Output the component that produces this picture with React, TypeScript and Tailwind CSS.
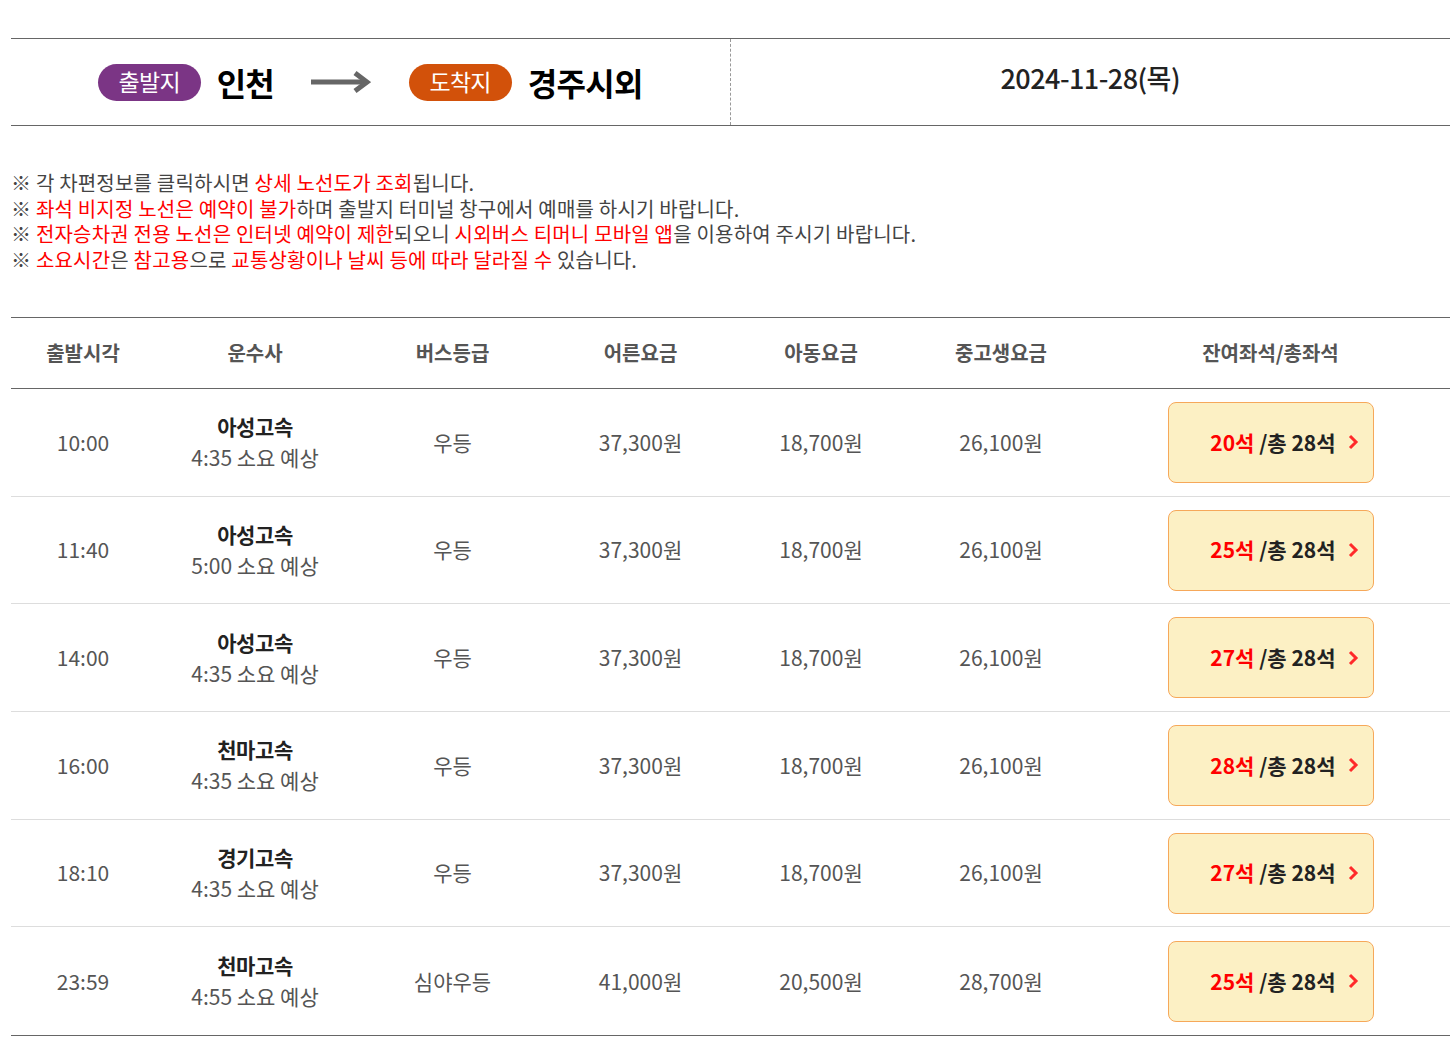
import React from "react";

type Bus = {
  time: string;
  company: string;
  duration: string;
  grade: string;
  adult: string;
  child: string;
  student: string;
  left: number;
  total: number;
};

const buses: Bus[] = [
  { time: "10:00", company: "아성고속", duration: "4:35", grade: "우등", adult: "37,300원", child: "18,700원", student: "26,100원", left: 20, total: 28 },
  { time: "11:40", company: "아성고속", duration: "5:00", grade: "우등", adult: "37,300원", child: "18,700원", student: "26,100원", left: 25, total: 28 },
  { time: "14:00", company: "아성고속", duration: "4:35", grade: "우등", adult: "37,300원", child: "18,700원", student: "26,100원", left: 27, total: 28 },
  { time: "16:00", company: "천마고속", duration: "4:35", grade: "우등", adult: "37,300원", child: "18,700원", student: "26,100원", left: 28, total: 28 },
  { time: "18:10", company: "경기고속", duration: "4:35", grade: "우등", adult: "37,300원", child: "18,700원", student: "26,100원", left: 27, total: 28 },
  { time: "23:59", company: "천마고속", duration: "4:55", grade: "심야우등", adult: "41,000원", child: "20,500원", student: "28,700원", left: 25, total: 28 },
];

const cols = "grid grid-cols-[144px_200px_195px_181px_180px_180px_1fr] items-center";

function Arrow() {
  return (
    <svg width="60" height="22" viewBox="0 0 60 22" fill="none">
      <path d="M0 11H54" stroke="#666" strokeWidth="5" />
      <path d="M44 2L56 11L44 20" stroke="#666" strokeWidth="5" strokeLinejoin="miter" />
    </svg>
  );
}

function Chevron() {
  return (
    <svg width="11" height="18" viewBox="0 0 11 18" fill="none">
      <path d="M2 3L8 9L2 15" stroke="#ff2a2a" strokeWidth="3" />
    </svg>
  );
}

const Red = ({ children }: { children: React.ReactNode }) => <span className="text-[#f00]">{children}</span>;

export default function App() {
  return (
    <div className="min-h-screen bg-white pl-[11px] pt-[38px] font-['Noto_Sans_CJK_KR',sans-serif] text-[#333]">
      {/* route header */}
      <div className="grid h-[88px] grid-cols-2 border-y border-[#666]">
        <div className="flex items-center justify-center border-r border-dashed border-[#999]">
          <span className="flex h-[37px] w-[103px] items-center justify-center rounded-full bg-[#7b3585] pb-[2px] text-[23px] text-white tracking-[-0.03em]">
            출발지
          </span>
          <span className="ml-[16px] text-[32px] font-bold text-black tracking-[-0.03em]">인천</span>
          <span className="ml-[37px] mr-[38px] flex items-center">
            <Arrow />
          </span>
          <span className="flex h-[37px] w-[103px] items-center justify-center rounded-full bg-[#d2510a] pb-[2px] text-[23px] text-white tracking-[-0.03em]">
            도착지
          </span>
          <span className="ml-[16px] text-[32px] font-bold text-black tracking-[-0.02em]">경주시외</span>
        </div>
        <div className="flex items-center justify-center pb-[8px] text-[27px] font-medium text-[#222] tracking-[-0.02em]">
          2024-11-28(목)
        </div>
      </div>

      {/* notices */}
      <div className="mt-[44px] text-[20px] leading-[25.5px] tracking-[0.01em] text-[#444]">
        <p>※ 각 차편정보를 클릭하시면 <Red>상세 노선도가 조회</Red>됩니다.</p>
        <p>※ <Red>좌석 비지정 노선은 예약이 불가</Red>하며 출발지 터미널 창구에서 예매를 하시기 바랍니다.</p>
        <p>
          ※ <Red>전자승차권 전용 노선은 인터넷 예약이 제한</Red>되오니 <Red>시외버스 티머니 모바일 앱</Red>을 이용하여 주시기 바랍니다.
        </p>
        <p>
          ※ <Red>소요시간</Red>은 <Red>참고용</Red>으로 <Red>교통상황이나 날씨 등에 따라 달라질 수</Red> 있습니다.
        </p>
      </div>

      {/* table */}
      <div className="mt-[45px] border-y border-[#666]">
        <div className={`${cols} h-[71px] border-b border-[#666] text-center text-[20px] font-bold text-[#555]`}>
          <div>출발시각</div>
          <div>운수사</div>
          <div>버스등급</div>
          <div>어른요금</div>
          <div>아동요금</div>
          <div>중고생요금</div>
          <div>잔여좌석/총좌석</div>
        </div>
        {buses.map((b, i) => (
          <div
            key={i}
            className={`${cols} h-[107.7px] text-center text-[21px] text-[#555] ${
              i < buses.length - 1 ? "border-b border-[#ddd]" : ""
            }`}
          >
            <div>{b.time}</div>
            <div className="flex flex-col items-center leading-[31px]">
              <span className="font-bold text-[#222] tracking-[-0.02em]">{b.company}</span>
              <span>{b.duration} 소요 예상</span>
            </div>
            <div>{b.grade}</div>
            <div>{b.adult}</div>
            <div>{b.child}</div>
            <div>{b.student}</div>
            <div className="flex justify-center">
              <button className="flex h-[81px] w-[206px] items-center justify-end gap-[12px] rounded-[8px] border border-[#f6a85a] bg-[#fcf0c4] pr-[14px] text-[21px] font-bold">
                <span>
                  <span className="text-[#f00]">{b.left}석</span>
                  <span className="text-[#222]"> /총 {b.total}석</span>
                </span>
                <Chevron />
              </button>
            </div>
          </div>
        ))}
      </div>
    </div>
  );
}
